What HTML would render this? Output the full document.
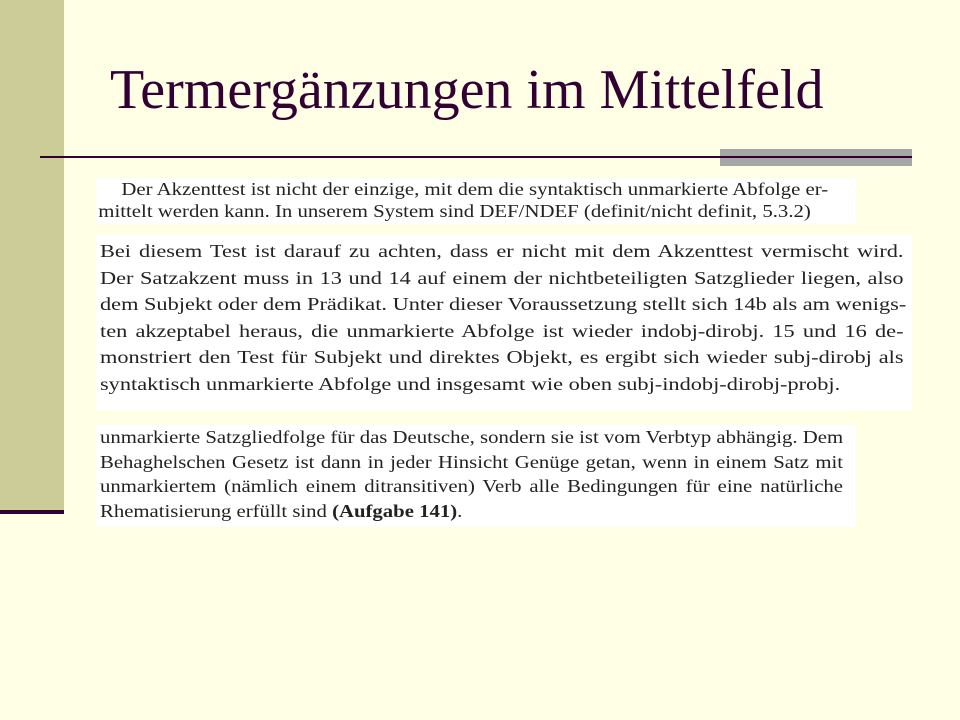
<!DOCTYPE html>
<html><head><meta charset="utf-8"><style>
body{margin:0;width:960px;height:720px;background:#ffffe5;position:relative;overflow:hidden;font-family:"Liberation Serif",serif}
.abs{position:absolute}
.box{position:absolute;background:#fff;color:#222;white-space:nowrap}
.j div{text-align:justify;text-align-last:justify}
.j div.l{text-align-last:left}
</style></head><body>
<div class="abs" style="left:0;top:0;width:64px;height:510px;background:#cccc99"></div>
<div class="abs" style="left:0;top:510px;width:64px;height:4px;background:#330033"></div>
<div class="abs" style="left:110px;top:58px;font-size:56px;color:#330033;white-space:nowrap">Termergänzungen im Mittelfeld</div>
<div class="abs" style="left:720px;top:149px;width:192px;height:17px;background:#a6a6a6"></div>
<div class="abs" style="left:40px;top:156px;width:872px;height:2px;background:#330033"></div>
<div class="box" style="left:96px;top:178px;width:760px;height:46px;font-size:18px;line-height:22px">
<div style="padding-left:22px;transform:scaleX(1.155);transform-origin:0 0">Der Akzenttest ist nicht der einzige, mit dem die syntaktisch unmarkierte Abfolge er-</div>
<div style="padding-left:2px;transform:scaleX(1.155);transform-origin:0 0">mittelt werden kann. In unserem System sind DEF/NDEF (definit/nicht definit, 5.3.2)</div>
</div>
<div class="box" style="left:96px;top:235px;width:816px;height:175px;font-size:18px;line-height:26.5px;padding-top:3px;box-sizing:border-box">
<div class="j" style="margin-left:4px;width:648px;transform:scaleX(1.24);transform-origin:0 0">
<div>Bei diesem Test ist darauf zu achten, dass er nicht mit dem Akzenttest vermischt wird.</div>
<div>Der Satzakzent muss in 13 und 14 auf einem der nichtbeteiligten Satzglieder liegen, also</div>
<div>dem Subjekt oder dem Prädikat. Unter dieser Voraussetzung stellt sich 14b als am wenigs-</div>
<div>ten akzeptabel heraus, die unmarkierte Abfolge ist wieder indobj-dirobj. 15 und 16 de-</div>
<div>monstriert den Test für Subjekt und direktes Objekt, es ergibt sich wieder subj-dirobj als</div>
<div class="l">syntaktisch unmarkierte Abfolge und insgesamt wie oben subj-indobj-dirobj-probj.</div>
</div></div>
<div class="box" style="left:96px;top:425px;width:760px;height:102px;font-size:17.5px;line-height:24.5px;box-sizing:border-box">
<div class="j" style="margin-left:4px;width:627px;transform:scaleX(1.185);transform-origin:0 0">
<div>unmarkierte Satzgliedfolge für das Deutsche, sondern sie ist vom Verbtyp abhängig. Dem</div>
<div>Behaghelschen Gesetz ist dann in jeder Hinsicht Genüge getan, wenn in einem Satz mit</div>
<div>unmarkiertem (nämlich einem ditransitiven) Verb alle Bedingungen für eine natürliche</div>
<div class="l">Rhematisierung erfüllt sind <b>(Aufgabe 141)</b>.</div>
</div></div>
</body></html>
